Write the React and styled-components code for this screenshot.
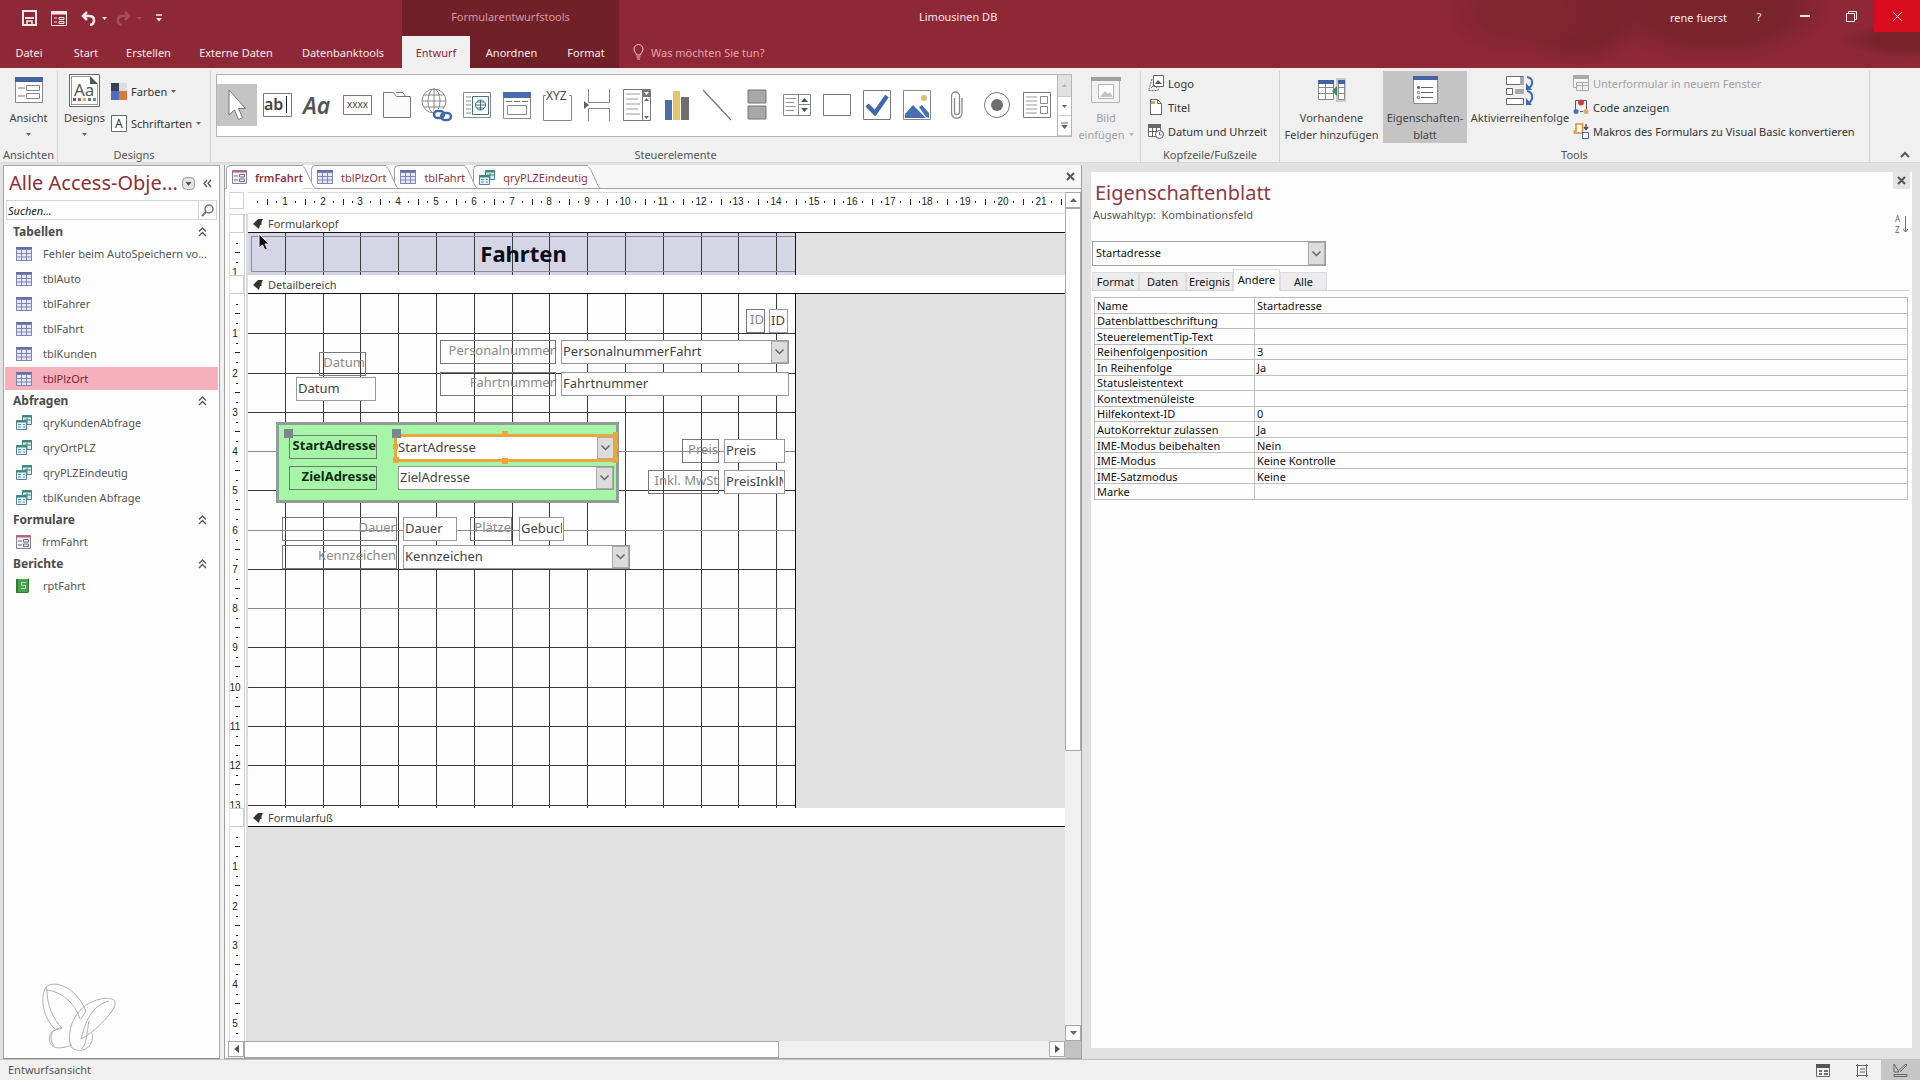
import React from "react";
import styled, { createGlobalStyle, css } from "styled-components";

const CM_X = 37.8;
const CM_Y = 39.27;
const FORM_WIDTH = 548;

const Global = createGlobalStyle`
  * { box-sizing: border-box; }
  body { margin: 0; background: #e1e1e1; font-family: "Noto Sans", "Open Sans", sans-serif; font-size: 11px; color: #3c3c3c; }
  button, input, select { font: inherit; color: inherit; border: 0; padding: 0; margin: 0; background: none; border-radius: 0; outline: 0; }
  svg { display: block; flex: none; }
`;

const Window = styled.div`
  display: flex;
  flex-direction: column;
  height: 100vh;
  overflow: hidden;
`;

/* ---------- title bar ---------- */
const Header = styled.header`
  height: 68px;
  flex: none;
  display: grid;
  grid-template-columns: 402px 217px 1fr;
  background:
    radial-gradient(ellipse 80px 44px at calc(100% - 400px) 14px, #82252f 50%, transparent),
    radial-gradient(ellipse 70px 56px at calc(100% - 340px) 12px, #7a242c 60%, transparent),
    radial-gradient(ellipse 120px 56px at calc(100% - 205px) 8px, #7a242c 60%, transparent),
    radial-gradient(ellipse 70px 18px at calc(100% - 10px) 40px, #78232a 50%, transparent),
    #8f2836;
  color: #f6e9ea;
`;
const HeaderPart = styled.div`
  display: grid;
  grid-template-rows: 36px 32px;
  min-width: 0;
  background: ${(p) => (p.$dark ? "#6f2029" : "transparent")};
`;
const QuickBar = styled.div`
  display: flex;
  align-items: center;
  padding: 0 0 0 22px;
`;
const QuickButton = styled.button`
  display: flex;
  align-items: center;
  gap: 6px;
  margin-right: ${(p) => p.$gap}px;
  opacity: ${(p) => (p.$off ? 0.2 : 1)};
`;
const ContextTitle = styled.div`
  text-align: center;
  line-height: 34px;
  color: #d99aa2;
`;
const TabRow = styled.nav`
  display: flex;
`;
const RibbonTab = styled.button`
  width: ${(p) => p.$w}px;
  white-space: nowrap;
  text-align: center;
  ${(p) => p.$active && css`background: #f0f0f0; color: #8f2836;`}
`;
const TitleLine = styled.div`
  display: flex;
  align-items: flex-start;
  justify-content: space-between;
`;
const AppTitle = styled.div`
  padding-left: 300px;
  line-height: 34px;
`;
const WindowButtons = styled.div`
  display: flex;
`;
const WindowButton = styled.button`
  width: 46px;
  height: 32px;
  display: flex;
  align-items: center;
  justify-content: center;
  ${(p) => p.$close && css`background: #d80c1c;`}
`;
const UserName = styled.button`
  width: 66px;
  height: 34px;
  text-align: left;
`;
const TellMe = styled.label`
  display: flex;
  align-items: center;
  gap: 7px;
  padding-left: 14px;
  input { width: 160px; color: #e3a6ad; }
  input::placeholder { color: #e3a6ad; opacity: 1; }
`;

/* ---------- ribbon ---------- */
const Ribbon = styled.section`
  flex: none;
  height: 95px;
  display: flex;
  background: #f0f0f0;
  border-bottom: 1px solid #d8d8d8;
  padding-top: 3px;
`;
const Group = styled.div`
  width: ${(p) => p.$w}px;
  flex: ${(p) => (p.$grow ? `1 1 ${p.$w}px` : "none")};
  display: grid;
  grid-template-rows: 75px 16px;
  border-right: 1px solid #d2d2d2;
`;
const GroupBody = styled.div`
  display: flex;
  min-width: 0;
  padding-left: ${(p) => p.$pad || 0}px;
`;
const GroupLabel = styled.div`
  text-align: center;
  line-height: 18px;
  color: #555;
  white-space: nowrap;
`;
const BigButton = styled.button`
  width: ${(p) => p.$w}px;
  height: 72px;
  flex: none;
  display: grid;
  grid-template-rows: 38px auto;
  justify-items: center;
  align-items: center;
  align-content: start;
  line-height: 17px;
  white-space: nowrap;
  color: ${(p) => (p.$off ? "#a0a0a0" : "#444")};
  background: ${(p) => (p.$active ? "#c4c4c4" : "transparent")};
`;
const BigText = styled.span`
  display: flex;
  flex-direction: column;
  align-items: center;
`;
const ArrowLine = styled.span`
  display: flex;
  align-items: center;
  gap: 4px;
  min-height: 17px;
`;
const SmallStack = styled.div`
  display: flex;
  flex-direction: column;
  padding-top: ${(p) => p.$top || 0}px;
`;
const SmallButton = styled.button`
  height: ${(p) => p.$h || 24}px;
  display: flex;
  align-items: center;
  gap: 4px;
  white-space: nowrap;
  color: ${(p) => (p.$off ? "#a0a0a0" : "#333")};
`;
const Gallery = styled.div`
  flex: 1;
  height: 63px;
  margin-top: 3px;
  display: flex;
  background: #fff;
  border: 1px solid #b4b4b4;
`;
const GalleryItems = styled.div`
  flex: 1;
  display: grid;
  grid-template-columns: repeat(21, 1fr);
  padding: 9px 0 10px;
`;
const GalleryItem = styled.button`
  display: flex;
  align-items: center;
  justify-content: center;
  background: ${(p) => (p.$active ? "#c4c4c4" : "transparent")};
`;
const GalleryScroll = styled.div`
  width: 14px;
  display: grid;
  grid-template-rows: 22px 19px 20px;
  border-left: 1px solid #b4b4b4;
`;
const GalleryArrow = styled.button`
  display: flex;
  align-items: center;
  justify-content: center;
  border-bottom: 1px solid #ccc;
  background: ${(p) => (p.$off ? "#e1e1e1" : "#fff")};
`;
const CollapseSlot = styled.div`
  width: 50px;
  display: flex;
  align-items: flex-end;
  justify-content: flex-end;
  padding: 0 10px 4px 0;
`;

/* ---------- main ---------- */
const Main = styled.main`
  flex: 1;
  min-height: 0;
  display: flex;
  padding-top: 2px;
  background: #e1e1e1;
`;
const NavPane = styled.aside`
  width: 217px;
  flex: none;
  margin-left: 3px;
  background: #fdfdfd;
  border: 1px solid #a8a8a8;
  border-bottom-color: #8a8a8a;
  display: flex;
  flex-direction: column;
  padding: 0 1px;
`;
const Splitter = styled.div`
  width: 4px;
  flex: none;
  background: #f0f0f0;
`;
const NavHead = styled.div`
  height: 34px;
  display: flex;
  align-items: center;
  justify-content: space-between;
  padding: 0 6px 0 4px;
  color: #8c3039;
`;
const NavTitle = styled.h1`
  margin: 0;
  font-size: 20px;
  line-height: 34px;
  font-weight: 400;
  white-space: nowrap;
`;
const NavIcons = styled.div`
  display: flex;
  align-items: center;
  gap: 8px;
`;
const Search = styled.label`
  height: 20px;
  flex: none;
  margin: 0 1px 2px;
  display: flex;
  border: 1px solid #d0d4dc;
  input { flex: 1; min-width: 0; font-style: italic; padding-left: 1px; }
  input::placeholder { color: #222; opacity: 1; }
`;
const SearchIcon = styled.span`
  width: 18px;
  display: flex;
  align-items: center;
  justify-content: center;
  border-left: 1px solid #d0d4dc;
`;
const NavGroup = styled.button`
  height: 19px;
  flex: none;
  display: flex;
  align-items: center;
  justify-content: space-between;
  padding: 0 11px 0 8px;
  font-weight: 700;
  font-size: 12px;
  color: #4c4c4c;
`;
const NavItem = styled.button`
  height: ${(p) => (p.$active ? 23 : 25)}px;
  margin: ${(p) => (p.$active ? "1px 0" : 0)};
  flex: none;
  display: flex;
  align-items: center;
  gap: 11px;
  padding-left: 11px;
  white-space: nowrap;
  color: ${(p) => (p.$active ? "#7a2532" : "#555")};
  background: ${(p) => (p.$active ? "#f4b0bc" : "transparent")};
`;
const Watermark = styled.div`
  margin: auto 0 5px 36px;
`;

/* ---------- document ---------- */
const Doc = styled.section`
  flex: 856 1 0;
  min-width: 0;
  display: flex;
  flex-direction: column;
  border: 1px solid #a0a0a0;
  border-top: 0;
  background: #fff;
`;
const DocTabs = styled.div`
  height: 24px;
  flex: none;
  display: flex;
  align-items: stretch;
  padding-left: 1px;
  background: #f7f7f7;
  border-bottom: 1px solid #a0a0a0;
`;
const DocTab = styled.button`
  position: relative;
  z-index: ${(p) => p.$z};
  height: 24px;
  display: flex;
  align-items: stretch;
  margin-right: -6px;
  font-weight: ${(p) => (p.$active ? 600 : 400)};
  color: #8c3342;
  svg:last-child { margin-left: -4px; }
`;
const DocTabFace = styled.span`
  position: relative;
  z-index: 1;
  display: flex;
  align-items: center;
  gap: 8px;
  padding-left: 5px;
  border: 1px solid #a0a0a0;
  border-width: 1px 0 0 1px;
  border-bottom: 1px solid ${(p) => (p.$active ? "#fff" : "#a0a0a0")};
  border-top-left-radius: 5px;
  background: #fff;
`;
const DocClose = styled.button`
  margin-left: auto;
  width: 22px;
  display: flex;
  align-items: center;
  justify-content: center;
`;
const Work = styled.div`
  flex: 1;
  min-height: 0;
  display: grid;
  grid-template-columns: 1fr 16px;
  grid-template-rows: 1fr 17px;
  padding-top: 3px;
  background: #fbfbfb;
`;
const Surface = styled.div`
  display: flex;
  flex-direction: column;
  min-width: 0;
  min-height: 0;
  overflow: hidden;
  padding-left: 4px;
`;
const Row = styled.div`
  display: grid;
  grid-template-columns: 15px 4px 1fr;
  flex: ${(p) => (p.$grow ? "1 1 0" : "none")};
  min-height: 0;
  height: ${(p) => (p.$h ? `${p.$h}px` : "auto")};
`;
const RulerCorner = styled.div`
  border: 1px solid #d0d0d0;
  border-left-color: #e8e8e8;
  background: #fff;
  margin-bottom: ${(p) => p.$gap || 0}px;
`;
const Gutter = styled.div`
  background: linear-gradient(90deg, #d0d0d0 1px, #fafafa 1px 2px, #dcdcdc 2px);
`;
const RulerTrack = styled.div`
  overflow: hidden;
  background: #fff;
  border: 1px solid #d8d8d8;
  border-width: ${(p) => (p.$across ? "1px 0" : "0 0 0 1px")};
  text { font-size: 10px; fill: #222; font-family: "Liberation Sans", Arial, sans-serif; }
`;
const SectionBar = styled.div`
  display: flex;
  align-items: center;
  gap: 4px;
  padding-left: 5px;
  color: #444;
  background: #fff;
  border-bottom: 1px solid #111;
`;
const Canvas = styled.div`
  position: relative;
  overflow: hidden;
  background: #e1e1e1;
`;
const Paper = styled.div`
  position: absolute;
  inset: 0 auto 0 0;
  width: ${FORM_WIDTH}px;
  background: ${(p) => p.$fill};
  border-right: 1px solid #111;
`;
const placed = css`
  position: absolute;
  left: ${(p) => p.$x}px;
  top: ${(p) => p.$y}px;
  width: ${(p) => p.$w}px;
  height: ${(p) => p.$h || 24}px;
`;
const FieldLabel = styled.label`
  ${placed}
  border: 1px solid #777;
  font-size: 13px;
  line-height: 19px;
  text-align: right;
  white-space: nowrap;
  color: ${(p) => (p.$bold ? "#0c2a10" : "#8a8a8a")};
  font-weight: ${(p) => (p.$bold ? 700 : 400)};
`;
const FieldInput = styled.input`
  ${placed}
  border: 1px solid #999;
  background: #fff;
  font-size: 13px;
  padding: 0 1px 3px;
  color: #444;
`;
const ComboFrame = styled.div`
  ${placed}
  display: grid;
  border: ${(p) => (p.$selected ? "3px solid #eca63c" : "1px solid #999")};
  background: #fff;
  select { grid-area: 1 / 1; appearance: none; font-size: 13px; padding: 0 20px 3px 1px; color: #444; min-width: 0; }
`;
const ComboArrow = styled.span`
  grid-area: 1 / 1;
  justify-self: end;
  width: 17px;
  display: flex;
  align-items: center;
  justify-content: center;
  background: #dcdcdc;
  border: 1px solid #aaa;
  pointer-events: none;
`;
const Highlight = styled.div`
  ${placed}
  background: #a5f6a7;
  border: 3px solid #8f9e96;
`;
const Handle = styled.span`
  ${placed}
  background: ${(p) => p.$c};
`;
const FormTitle = styled.h2`
  position: absolute;
  left: 3px;
  right: 0;
  top: 3px;
  height: 36px;
  margin: 0;
  border: 1px solid #8c8c94;
  border-right: 0;
  text-align: center;
  font-size: 22px;
  line-height: 33px;
  color: #0b0b12;
`;
const Pointer = styled.div`
  position: absolute;
  left: 10px;
  top: 0;
  z-index: 3;
`;
const VScroll = styled.div`
  display: flex;
  flex-direction: column;
  background: #f0f0f0;
`;
const HScroll = styled.div`
  display: flex;
  margin-left: 3px;
  background: #f0f0f0;
`;
const ScrollButton = styled.button`
  width: 16px;
  height: 16px;
  flex: none;
  display: flex;
  align-items: center;
  justify-content: center;
  background: #fff;
  border: 1px solid #a8a8a8;
`;
const Thumb = styled.div`
  flex: ${(p) => p.$size} 1 0;
  background: #fff;
  border: 1px solid #a8a8a8;
`;
const Track = styled.div`
  flex: ${(p) => p.$size} 1 0;
`;
const Corner = styled.div`
  background: #c2c2c2;
`;

/* ---------- property sheet ---------- */
const Side = styled.aside`
  flex: 821 1 0;
  min-width: 0;
  padding: 7px 8px 11px 9px;
  display: flex;
`;
const Sheet = styled.div`
  flex: 1;
  min-width: 0;
  background: #fefefe;
  padding: 5px 2px 0 1px;
  display: flex;
  flex-direction: column;
`;
const SheetHead = styled.div`
  display: flex;
  justify-content: space-between;
  height: 64px;
`;
const SheetTitle = styled.h2`
  margin: 0;
  padding-left: 3px;
  font-size: 20px;
  line-height: 31px;
  font-weight: 400;
  color: #8c3a48;
`;
const SheetKind = styled.div`
  padding-left: 1px;
  line-height: 14px;
  color: #555;
  white-space: pre;
`;
const SheetTools = styled.div`
  display: flex;
  flex-direction: column;
  align-items: center;
  gap: 24px;
`;
const SheetClose = styled.button`
  width: 17px;
  height: 17px;
  margin-top: -5px;
  display: flex;
  align-items: center;
  justify-content: center;
  background: #e4e4e4;
`;
const ObjectSelect = styled.div`
  width: 234px;
  height: 25px;
  display: grid;
  border: 1px solid #a0a0a0;
  select { grid-area: 1 / 1; appearance: none; padding: 0 20px 3px 3px; color: #111; }
`;
const SheetTabs = styled.div`
  display: flex;
  align-items: flex-end;
  height: 25px;
  border-bottom: 1px solid #d0d0d0;
`;
const SheetTab = styled.button`
  width: 47px;
  height: ${(p) => (p.$active ? 22 : 18)}px;
  margin-bottom: ${(p) => (p.$active ? -1 : 0)}px;
  padding-bottom: ${(p) => (p.$active ? 3 : 0)}px;
  color: #111;
  background: ${(p) => (p.$active ? "#fefefe" : "#ececec")};
  border: 1px solid #dcdcdc;
  border-bottom: 0;
`;
const PropTable = styled.table`
  height: 203px;
  margin: 6px 2px 0;
  border-collapse: collapse;
  table-layout: fixed;
  line-height: 13px;
  color: #111;
  th, td { padding: 0 2px; border: 1px solid #bdbdbd; text-align: left; font-weight: 400; white-space: nowrap; }
  th { width: 160px; }
`;

const StatusBar = styled.footer`
  height: 21px;
  flex: none;
  display: flex;
  justify-content: space-between;
  padding-left: 8px;
  background: #f0f0f0;
  border-top: 1px solid #c0c0c0;
  line-height: 19px;
  color: #555;
`;
const ViewButtons = styled.div`
  display: flex;
`;
const ViewButton = styled.button`
  width: 39px;
  display: flex;
  align-items: center;
  justify-content: center;
  background: ${(p) => (p.$active ? "#c6c6c6" : "transparent")};
`;

/* ---------- icons ---------- */
const S = ({ w = 28, h = 28, children, ...r }) => (
  <svg width={w} height={h} viewBox={`0 0 ${w} ${h}`} fill="none" stroke="#666" {...r}>{children}</svg>
);
const Down = ({ c = "#666" }) => (
  <S w={7} h={4} stroke="none"><path d="M0 0h7L3.5 4z" fill={c} /></S>
);
const SmallDown = ({ c = "#666" }) => (
  <S w={5} h={3} stroke="none"><path d="M0 0h5L2.5 3z" fill={c} /></S>
);
const Chevron = () => <S w={11} h={8}><path d="M1.5 1.5l4 4 4-4" strokeWidth="1.5" /></S>;
const Cross = ({ size = 10, c = "#555", sw = 2 }) => (
  <S w={size} h={size} stroke={c} strokeWidth={sw}><path d={`M1 1L${size - 1} ${size - 1}M${size - 1} 1L1 ${size - 1}`} /></S>
);
const DoubleUp = () => <S w={9} h={10} stroke="#555" strokeWidth="1.3"><path d="M1 4.5l3.5-3.5 3.5 3.5M1 9l3.5-3.5 3.5 3.5" /></S>;

const TableIcon = () => (
  <S w={16} h={14} stroke="none">
    <path d="M0 0h16v14H0z" fill="#7f86b4" />
    <path d="M1 3h4v3H1zM6 3h4v3H6zM11 3h4v3h-4zM1 7h4v2.500H1zM6 7h4v2.500H6zM11 7h4v2.500h-4zM1 10.500h4v2.500H1zM6 10.500h4v2.500H6zM11 10.500h4v2.500h-4z" fill="#e4e8f6" />
    <path d="M0 0h16v2H0z" fill="#686fa0" />
  </S>
);
const QueryIcon = () => (
  <S w={16} h={15} stroke="#4f7f8a">
    <path d="M6.500.5h9v9h-9z" fill="#d8f0ee" /><path d="M6 1.500h10" stroke="#3a8a7a" strokeWidth="2" /><path d="M11 3v6M8 5h7" />
    <path d="M.5 5.500h10v9H.5z" fill="#e6f2fa" stroke="#5a7f9a" /><path d="M0 6.500h11" stroke="#3a8a7a" strokeWidth="2" />
    <path d="M2 9.500h3M7 9.500h2M2 12h3M7 12h2" stroke="#4e94b4" />
  </S>
);
const FormIcon = () => (
  <S w={15} h={14} stroke="#8a7f98">
    <path d="M.5.5h14v13H.5z" fill="#f3eef4" /><path d="M0 1.500h15" stroke="#b8607a" strokeWidth="2" />
    <path d="M2 6h4M2 10h4" stroke="#6a6a80" /><path d="M7.500 4.500h5v2.500h-5zM7.500 9h5v2.500h-5z" stroke="#6a6a80" />
  </S>
);
const ReportIcon = () => (
  <S w={16} h={15} stroke="none">
    <path d="M0 1h12l1-1v14l-1 1H0z" fill="#2f7a34" /><path d="M2 1h10v13H2z" fill="#4da04e" />
    <path d="M5 4h5v1H6v2h4v4H5v-1h4V8H5z" fill="#b4e2ac" />
  </S>
);
const navIcons = { table: TableIcon, query: QueryIcon, form: FormIcon, report: ReportIcon };

const galleryIcons = [
  ["Auswählen", <S key="0" w={20} h={32}><path d="M2 1v25l5.500-5 4 9.500 4-2-4-9h7z" fill="#fff" stroke="#777" /></S>],
  ["Textfeld", <S key="1" w={29} h={24}><path d="M.5.5h28v23H.5z" stroke="#777" /><text x="1" y="17" fontSize="16" fontWeight="600" fill="#444" stroke="none">ab</text><path d="M23.500 3v17" stroke="#222" /></S>],
  ["Bezeichnung", <S key="2" w={30} h={26}><text x="1" y="22" fontSize="23" fontWeight="600" fontStyle="italic" fill="#555" stroke="none">Aa</text></S>],
  ["Schaltfläche", <S key="3" w={29} h={20}><path d="M.5.5h28v19H.5z" stroke="#777" /><text x="4" y="13" fontSize="10" fill="#444" stroke="none">xxxx</text></S>],
  ["Registersteuerelement", <S key="4" w={28} h={28}><path d="M.5 26.500V1.500h10l3 4h14v21z" fill="#fafafa" stroke="#777" /><path d="M13 1.500h7l2.500 4" stroke="#777" /></S>],
  ["Link", <S key="5" w={32} h={34}><circle cx="13" cy="13" r="12" stroke="#888" /><path d="M13 1v24M1 13h24M3 7h20M3 19h20" stroke="#888" /><ellipse cx="13" cy="13" rx="6" ry="12" stroke="#888" /><path d="M13 21h18v12H13z" fill="#fff" stroke="none" /><rect x="13" y="23" width="10" height="7" rx="3.500" stroke="#3f68ab" strokeWidth="2.500" /><rect x="20" y="25" width="10" height="7" rx="3.500" stroke="#3f68ab" strokeWidth="2.500" /></S>],
  ["Webbrowser", <S key="6" w={28} h={26}><path d="M.5.5h27v25H.5z" stroke="#888" /><path d="M3 5h5M3 9h5M3 13h5M3 17h5M3 21h5" stroke="#888" /><path d="M9.500 4.500h16v18h-16z" stroke="#4a7186" /><circle cx="17.500" cy="13" r="5" stroke="#3f7089" /><path d="M12 13h11M17.500 8v10M14 10h7M14 16h7" stroke="#3f7089" /></S>],
  ["Navigation", <S key="7" w={28} h={27}><path d="M.5.5h27v26H.5z" stroke="#888" /><path d="M0 0h28v6H0z" fill="#4b6cac" stroke="none" /><path d="M3 9.500h22" strokeDasharray="6 2" stroke="#777" /><path d="M4.500 13.500h19v9h-19z" stroke="#888" /></S>],
  ["Optionsgruppe", <S key="8" w={29} h={32}><path d="M3 6.500H.5v25h28v-25H26" stroke="#888" /><text x="3" y="11" fontSize="12" fill="#444" stroke="none">XYZ</text></S>],
  ["Seitenumbruch", <S key="9" w={26} h={32}><path d="M4.500 0v13.500h21V0M4.500 32V19.500h21V32" stroke="#888" /><path d="M0 12l5 4-5 4z" fill="#555f78" stroke="none" /></S>],
  ["Kombinationsfeld", <S key="10" w={28} h={32}><path d="M.5.5h27v31H.5zM19.500 0v32M19 7.500h9" stroke="#777" /><path d="M20 1h7v6h-7z" fill="#777" stroke="none" /><path d="M21 3h5l-2.500 3z" fill="#fff" stroke="none" /><path d="M3 5h14M3 10h12M3 15h14M3 20h12M3 25h14" stroke="#999" /><path d="M21 12h5l-2.500-3zM21 27h5l-2.500 3z" fill="#666" stroke="none" /></S>],
  ["Diagramm", <S key="11" w={24} h={30} stroke="none"><path d="M0 10h7v20H0z" fill="#4a6fa8" /><path d="M8 1h7v29H8z" fill="#e4c46c" /><path d="M16 7h8v23h-8z" fill="#6e6e6e" /></S>],
  ["Linie", <S key="12" w={28} h={32}><path d="M0 1l28 30" stroke="#777" strokeWidth="1.300" /></S>],
  ["Umschaltfläche", <S key="13" w={20} h={32}><path d="M1 1h18v13H1zM1 17h18v13H1z" fill="#a8a8a8" stroke="#777" /></S>],
  ["Listenfeld", <S key="14" w={28} h={22}><path d="M.5.5h27v21H.5zM15.500 0v22M15 10.500h13" stroke="#888" /><path d="M3 4.500h10M3 8.500h8M3 12.500h10M3 16.500h8" stroke="#999" /><path d="M18 8h7l-3.500-4zM18 14h7l-3.500 4z" fill="#4a5560" stroke="none" /></S>],
  ["Rechteck", <S key="15" w={28} h={22}><path d="M.5.5h27v21H.5z" stroke="#777" /></S>],
  ["Kontrollkästchen", <S key="16" w={28} h={30}><path d="M.5.5h27v29H.5z" stroke="#777" /><path d="M4 15l8 8L24 6" stroke="#3f68ab" strokeWidth="4.500" /></S>],
  ["Bild", <S key="17" w={28} h={30}><path d="M.5.5h27v29H.5z" stroke="#888" /><path d="M2 28v-4l8-9 13 13zM16 17l3-2 7 8v5l-3-1z" fill="#4a6fb0" stroke="none" /><circle cx="21" cy="8" r="3" fill="#e0bd6a" stroke="none" /></S>],
  ["Anlage", <S key="18" w={12} h={30}><path d="M3.500 8v14a2.500 2.500 0 005 0V6a4 4 0 00-8 0v17a5 5 0 0010.500 0V8" stroke="#888" strokeWidth="1.300" /></S>],
  ["Optionsfeld", <S key="19" w={28} h={28}><circle cx="14" cy="14" r="12.500" stroke="#777" /><circle cx="14" cy="14" r="6" fill="#6e6e6e" stroke="none" /></S>],
  ["Unterformular", <S key="20" w={28} h={26}><path d="M.5.5h27v25H.5z" stroke="#777" /><path d="M3 5h11M3 9h11M3 13h11M3 17h11M3 21h11" stroke="#999" /><path d="M17.500 4.500h7v7h-7zM17.500 14.500h7v7h-7z" stroke="#888" /></S>],
];

const AnsichtIcon = () => <S w={28} h={26}><path d="M.5.5h27v25H.5z" fill="#fff" stroke="#888" /><path d="M0 0h28v5H0z" fill="#4463a0" stroke="none" /><path d="M3 11h7M3 19h7" stroke="#777" /><path d="M11.500 8.500h13v5h-13zM11.500 16.500h13v5h-13z" stroke="#888" /></S>;
const DesignsIcon = () => <S w={31} h={33}><path d="M.5.5h30v32H.5z" fill="#fff" stroke="#666" /><path d="M2.500 2.500h18l8 8v20h-26z" stroke="#999" /><path d="M21 2v8h8z" fill="#555" stroke="none" /><text x="5" y="22" fontSize="17" fill="#555" stroke="none">Aa</text><path d="M4 24h3v3H4z" fill="#4463a0" stroke="none" /><path d="M9 24h3v3H9z" fill="#c8553d" stroke="none" /><path d="M14 24h3v3h-3z" fill="#e0b04c" stroke="none" /><path d="M19 24h3v3h-3z" fill="#4a7fb0" stroke="none" /><path d="M24 24h3v3h-3z" fill="#6a9a4a" stroke="none" /></S>;
const ColorsIcon = () => <S w={16} h={17} stroke="none"><path d="M0 0h8v8H0z" fill="#3a4250" /><path d="M8 0h8v8H8z" fill="#d8dce4" /><path d="M0 8h8v9H0z" fill="#4b6cc0" /><path d="M8 8h8v9H8z" fill="#d87a3c" /></S>;
const FontsIcon = () => <S w={16} h={17}><path d="M.5.5h15v16H.5z" fill="#fff" /><text x="4" y="13" fontSize="12" fill="#333" stroke="none">A</text></S>;
const PictureIcon = () => <S w={30} h={26} stroke="#b4b4b4"><path d="M.5.5h28v25H.5z" fill="#f2f2f2" /><path d="M0 0h30v4H0z" fill="#a0a0a0" stroke="none" /><path d="M7.500 7.500h15v14h-15z" fill="#fff" /><path d="M9 20l5-6 3 3 2-2 3 5z" fill="#c4c4c4" stroke="none" /></S>;
const LogoIcon = () => <S w={16} h={16}><path d="M5.500.5h10v11h-10z" fill="#fff" /><path d="M7 9l3-4 4 4z" fill="#4a5a78" stroke="none" /><path d="M4 4L.5 15.500H10l1-3" strokeDasharray="2 1" /><path d="M3 13l3-3 3 3" /></S>;
const TitelIcon = () => <S w={16} h={16}><path d="M2.500.5h7l4 4v11h-11z" fill="#fff" /><path d="M9.500.5v4h4" /><path d="M3 2h4v3H3z" fill="#c8a860" stroke="none" /></S>;
const DateIcon = () => <S w={16} h={16}><path d="M.5 1.500h12v12H.5zM0 4.500h13M4.500 4v9M8.500 4v9M0 8.500h12" fill="#fff" /><path d="M0 1h13v3H0z" fill="#666" stroke="none" /><circle cx="11.500" cy="11.500" r="4" fill="#fff" stroke="#557" /><path d="M11.500 9v3h2" /></S>;
const FieldsIcon = () => <S w={28} h={24}><path d="M.5 2.500h15v19H.5zM0 9.500h15M0 15.500h15M7.500 5v16" fill="#fff" stroke="#888" /><path d="M0 2h16v4H0z" fill="#4463a0" stroke="none" /><path d="M18 0h10v24H18z" fill="#c6cbd0" stroke="none" /><path d="M20.500 2.500h6v19h-6zM20 9.500h6M20 15.500h6" fill="#fff" stroke="#888" /><path d="M20 2h7v4h-7z" fill="#4463a0" stroke="none" /><path d="M19 8v10l-5-5z" fill="#4a8068" stroke="none" /></S>;
const SheetIcon = () => <S w={25} h={28}><path d="M.5.5h24v27H.5z" fill="#fff" stroke="#888" /><path d="M0 0h25v4H0z" fill="#4463a0" stroke="none" /><path d="M8 11.500h12M8 16.500h12M8 21.500h12" stroke="#666" /><circle cx="5.500" cy="11.500" r="1.500" fill="#556" stroke="none" /><circle cx="5.500" cy="16.500" r="1.200" /><circle cx="5.500" cy="21.500" r="1.200" /></S>;
const OrderIcon = () => <S w={28} h={29}><path d="M.5.5h17v8H.5zM.5 12.500h6v6h-6zM.5 22.500h17v6H.5z" fill="#fff" /><path d="M14 1h4v8h-4zM9 13h9v5H9z" fill="#a8a8a8" stroke="none" /><path d="M21 1c6 1 7 7 2 11M21 15c6 1 7 8 2 12" stroke="#3f68ab" strokeWidth="2" /><path d="M20 7v7h6zM20 22v7h6z" fill="#3f68ab" stroke="none" /></S>;
const SubformIcon = () => <S w={16} h={16} stroke="#aaa"><path d="M.5.5h15v12H.5z" fill="#f6f6f6" /><path d="M0 0h16v4H0z" fill="#aaa" stroke="none" /><path d="M3.500 7.500h12v8h-12zM3 10.500h12M9.500 8v7" fill="#eee" /></S>;
const CodeIcon = () => <S w={16} h={16}><path d="M2.500 10V1.500H6M13.500 10V1.500H10" stroke="#555" /><circle cx="8" cy="3.500" r="3" fill="#c8403c" stroke="none" /><circle cx="3" cy="12.500" r="2.500" fill="#4a6fb0" stroke="none" /><circle cx="13" cy="12.500" r="2.500" fill="#e4a86c" stroke="none" /><path d="M7 12.500h3" /></S>;
const MacroIcon = () => <S w={16} h={16}><path d="M3 1h6.500v9H1.500V8H3z" stroke="#dd8c34" strokeWidth="1.600" fill="#fff" /><path d="M9.500 9.500h6v6h-6z" fill="#fff" stroke="#4463a0" /><path d="M13 1v5M11 4l2 2.500 2-2.500" stroke="#444" strokeWidth="1.300" /></S>;

/* ---------- rulers and grid ---------- */
const range = (n) => Array.from({ length: n }, (_, i) => i);

const HorizontalRuler = () => (
  <svg width="100%" height="18">
    {range(22).map((i) => {
      const x = Math.round(i * CM_X) - 1;
      return (
        <g key={i} shapeRendering="crispEdges">
          {i > 0 && <text x={x} y="12" textAnchor="middle">{i}</text>}
          <path d={`M${x + 10.5} 8v2M${x + 20.5} 6v6M${x + 29.5} 8v2`} stroke="#222" />
        </g>
      );
    })}
  </svg>
);

const VerticalRuler = ({ count, height = "100%" }) => (
  <svg width="14" height={height}>
    {range(count).map((i) => {
      const y = Math.round(i * CM_Y);
      return (
        <g key={i} shapeRendering="crispEdges">
          {i > 0 && <text x="5" y={y + 4} textAnchor="middle">{i}</text>}
          <path d={`M6 ${y + 10.5}h2M5 ${y + 19.5}h5M6 ${y + 29.5}h2`} stroke="#222" />
        </g>
      );
    })}
  </svg>
);

const GridLines = ({ rows }) => (
  <svg width="100%" height="100%" shapeRendering="crispEdges" stroke="#3a3a3a">
    {range(14).map((i) => {
      const x = Math.round((i + 1) * CM_X) - 0.5;
      return <path key={i} d={`M${x} 0v900`} />;
    })}
    {range(rows).map((i) => (
      <path key={i} d={`M0 ${Math.round((i + 1) * CM_Y) + 0.5}h${FORM_WIDTH}`} stroke={[3, 5, 7].includes(i) ? "#8a8a8a" : "#3a3a3a"} />
    ))}
  </svg>
);

const Section = ({ title, height, children, rulerCount }) => (
  <>
    <Row $h={19}>
      <RulerCorner />
      <Gutter />
      <SectionBar>
        <S w={11} h={11} stroke="none"><path d="M0 6l5-5h5L8.500 4v3H7l-1 4z" fill="#333" /></S>
        {title}
      </SectionBar>
    </Row>
    <Row $h={height} $grow={!height}>
      <RulerTrack><VerticalRuler count={rulerCount} height={height || 210} /></RulerTrack>
      <Gutter />
      <Canvas>{children}</Canvas>
    </Row>
  </>
);

const Combo = ({ id, value, ...place }) => (
  <ComboFrame {...place}>
    <select id={id} defaultValue={value}><option>{value}</option></select>
    <ComboArrow><Chevron /></ComboArrow>
  </ComboFrame>
);

const gallerySelected = 0;
const tables = ["Fehler beim AutoSpeichern vo...", "tblAuto", "tblFahrer", "tblFahrt", "tblKunden", "tblPlzOrt"];
const navGroups = [
  ["Tabellen", "table", tables],
  ["Abfragen", "query", ["qryKundenAbfrage", "qryOrtPLZ", "qryPLZEindeutig", "tblKunden Abfrage"]],
  ["Formulare", "form", ["frmFahrt"]],
  ["Berichte", "report", ["rptFahrt"]],
];
const docTabs = [["frmFahrt", "form"], ["tblPlzOrt", "table"], ["tblFahrt", "table"], ["qryPLZEindeutig", "query"]];
const properties = [
  ["Name", "Startadresse"], ["Datenblattbeschriftung", ""], ["SteuerelementTip-Text", ""],
  ["Reihenfolgenposition", "3"], ["In Reihenfolge", "Ja"], ["Statusleistentext", ""],
  ["Kontextmenüleiste", ""], ["Hilfekontext-ID", "0"], ["AutoKorrektur zulassen", "Ja"],
  ["IME-Modus beibehalten", "Nein"], ["IME-Modus", "Keine Kontrolle"], ["IME-Satzmodus", "Keine"], ["Marke", ""],
];
const mainTabs = [["Datei", 58], ["Start", 56], ["Erstellen", 69], ["Externe Daten", 106], ["Datenbanktools", 108]];

const TitleBar = () => (
  <Header>
    <HeaderPart>
      <QuickBar>
        <QuickButton $gap={14} aria-label="Speichern"><S w={15} h={16} stroke="#f6e9ea" strokeWidth="2"><path d="M1 1h13v14H1zM3 8h9" /><path d="M5 15v-4h5v4" strokeWidth="1.500" /></S></QuickButton>
        <QuickButton $gap={14} aria-label="Formular"><S w={16} h={15} stroke="#f6e9ea"><path d="M.5.5h15v14H.5z" /><path d="M0 2h16" strokeWidth="3" /><path d="M3 7h3M3 11h3M8 6.500h5v2H8zM8 10.500h5v2H8z" /></S></QuickButton>
        <QuickButton $gap={9} aria-label="Rückgängig"><S w={15} h={15} stroke="#f6e9ea" strokeWidth="2.500"><path d="M6 1L2 5l4 4M2 5h6c7 0 6 8 1 9" /></S><SmallDown c="#f6e9ea" /></QuickButton>
        <QuickButton $gap={14} $off aria-label="Wiederholen"><S w={15} h={15} stroke="#f6e9ea" strokeWidth="2.500"><path d="M9 1l4 4-4 4M13 5H7c-7 0-6 8-1 9" /></S><SmallDown c="#f6e9ea" /></QuickButton>
        <QuickButton $gap={0} aria-label="Anpassen"><S w={6} h={8} stroke="#f6e9ea"><path d="M0 1h6" strokeWidth="1.500" /><path d="M0 4h6L3 7.500z" fill="#f6e9ea" stroke="none" /></S></QuickButton>
      </QuickBar>
      <TabRow>{mainTabs.map(([t, w]) => <RibbonTab key={t} $w={w}>{t}</RibbonTab>)}</TabRow>
    </HeaderPart>
    <HeaderPart $dark>
      <ContextTitle>Formularentwurfstools</ContextTitle>
      <TabRow>
        <RibbonTab $w={68} $active>Entwurf</RibbonTab>
        <RibbonTab $w={83}>Anordnen</RibbonTab>
        <RibbonTab $w={66}>Format</RibbonTab>
      </TabRow>
    </HeaderPart>
    <HeaderPart>
      <TitleLine>
        <AppTitle>Limousinen DB</AppTitle>
        <WindowButtons>
          <UserName>rene fuerst</UserName>
          <WindowButton aria-label="Hilfe">?</WindowButton>
          <WindowButton aria-label="Minimieren"><S w={10} h={2} stroke="#f6e9ea" strokeWidth="2"><path d="M0 1h10" /></S></WindowButton>
          <WindowButton aria-label="Wiederherstellen"><S w={11} h={11} stroke="#f6e9ea"><path d="M.5 2.500h8v8h-8zM2.500 2V.5h8v8H9" /></S></WindowButton>
          <WindowButton $close aria-label="Schließen"><Cross size={11} c="#f6e9ea" sw={1} /></WindowButton>
        </WindowButtons>
      </TitleLine>
      <TellMe>
        <S w={11} h={16} stroke="#f0c8cc"><path d="M3.500 11c0-2-2.500-3-2.500-6a4.500 4.500 0 019 0c0 3-2.500 4-2.500 6zM3.500 13h4M4 15h3" /></S>
        <input placeholder="Was möchten Sie tun?" aria-label="Was möchten Sie tun?" />
      </TellMe>
    </HeaderPart>
  </Header>
);

const RibbonBar = () => (
  <Ribbon>
    <Group $w={58}>
      <GroupBody><BigButton $w={57}><AnsichtIcon /><BigText>Ansicht<ArrowLine><SmallDown /></ArrowLine></BigText></BigButton></GroupBody>
      <GroupLabel>Ansichten</GroupLabel>
    </Group>
    <Group $w={153}>
      <GroupBody>
        <BigButton $w={53}><DesignsIcon /><BigText>Designs<ArrowLine><SmallDown /></ArrowLine></BigText></BigButton>
        <SmallStack $top={4}>
          <SmallButton $h={32}><ColorsIcon />Farben <SmallDown /></SmallButton>
          <SmallButton $h={32}><FontsIcon />Schriftarten <SmallDown /></SmallButton>
        </SmallStack>
      </GroupBody>
      <GroupLabel>Designs</GroupLabel>
    </Group>
    <Group $w={930} $grow>
      <GroupBody $pad={5}>
        <Gallery>
          <GalleryItems>
            {galleryIcons.map(([name, icon], i) => <GalleryItem key={name} aria-label={name} $active={i === gallerySelected}>{icon}</GalleryItem>)}
          </GalleryItems>
          <GalleryScroll>
            <GalleryArrow $off aria-label="Nach oben"><S w={5} h={3} stroke="none"><path d="M0 3h5L2.500 0z" fill="#b4b4b4" /></S></GalleryArrow>
            <GalleryArrow aria-label="Nach unten"><SmallDown /></GalleryArrow>
            <GalleryArrow aria-label="Mehr"><S w={7} h={8}><path d="M0 1h7" /><path d="M0 3h7L3.500 7z" fill="#666" stroke="none" /></S></GalleryArrow>
          </GalleryScroll>
        </Gallery>
        <BigButton $w={68} $off><PictureIcon /><BigText>Bild<ArrowLine>einfügen <SmallDown c="#b4b4b4" /></ArrowLine></BigText></BigButton>
      </GroupBody>
      <GroupLabel>Steuerelemente</GroupLabel>
    </Group>
    <Group $w={139}>
      <GroupBody $pad={7}>
        <SmallStack>
          <SmallButton><LogoIcon />Logo</SmallButton>
          <SmallButton><TitelIcon />Titel</SmallButton>
          <SmallButton><DateIcon />Datum und Uhrzeit</SmallButton>
        </SmallStack>
      </GroupBody>
      <GroupLabel>Kopfzeile/Fußzeile</GroupLabel>
    </Group>
    <Group $w={590}>
      <GroupBody>
        <BigButton $w={103}><FieldsIcon /><BigText><span>Vorhandene</span><span>Felder hinzufügen</span></BigText></BigButton>
        <BigButton $w={84} $active><SheetIcon /><BigText><span>Eigenschaften-</span><span>blatt</span></BigText></BigButton>
        <BigButton $w={106}><OrderIcon /><BigText>Aktivierreihenfolge</BigText></BigButton>
        <SmallStack>
          <SmallButton $off><SubformIcon />Unterformular in neuem Fenster</SmallButton>
          <SmallButton><CodeIcon />Code anzeigen</SmallButton>
          <SmallButton><MacroIcon />Makros des Formulars zu Visual Basic konvertieren</SmallButton>
        </SmallStack>
      </GroupBody>
      <GroupLabel>Tools</GroupLabel>
    </Group>
    <CollapseSlot><S w={10} h={7} stroke="#555" strokeWidth="2"><path d="M1 6l4-4 4 4" /></S></CollapseSlot>
  </Ribbon>
);

const Navigation = () => (
  <NavPane>
    <NavHead>
      <NavTitle>Alle Access-Obje...</NavTitle>
      <NavIcons>
        <S w={13} h={13} stroke="#999"><rect x=".5" y=".5" width="12" height="12" rx="4" fill="#e4e4e4" /><path d="M3.500 5h6L6.500 9z" fill="#555" stroke="none" /></S>
        <S w={9} h={9} stroke="#555" strokeWidth="1.300"><path d="M4 1L1 4.500 4 8M8 1L5 4.500 8 8" /></S>
      </NavIcons>
    </NavHead>
    <Search>
      <input placeholder="Suchen..." aria-label="Suchen" />
      <SearchIcon><S w={13} h={13} stroke="#6a7488" strokeWidth="1.500"><circle cx="8" cy="5" r="4" /><path d="M5 8l-4 4" strokeWidth="2" /></S></SearchIcon>
    </Search>
    {navGroups.map(([name, kind, items]) => {
      const Icon = navIcons[kind];
      return (
        <React.Fragment key={name}>
          <NavGroup>{name}<DoubleUp /></NavGroup>
          {items.map((it) => <NavItem key={it} $active={it === "tblPlzOrt"}><Icon />{it}</NavItem>)}
        </React.Fragment>
      );
    })}
    <Watermark>
      <S w={80} h={72} stroke="#b0b0b0">
        <path d="M5 6C12-1 34 4 45 30c-4 6-4 8-6 8C34 22 20 10 5 9zM5 6c-6 10-4 30 10 43l6-2C12 38 6 24 6 9" />
        <path d="M15 49c-8 0-9 14-2 17 6 2 12 0 18-2M21 47c-10-1-14 10-8 18M30 66c-6-18 6-44 30-48 16-3 18 4 8 16C58 46 48 54 40 58c6-24 14-34 28-38M30 66c6 6 18 4 21-6 1-4 0-8 0-8M40 68c6-2 6-20 8-28" />
      </S>
    </Watermark>
  </NavPane>
);

const Designer = () => (
  <Doc>
    <DocTabs>
      {docTabs.map(([name, kind], i) => {
        const Icon = navIcons[kind];
        const active = i === 0;
        return (
          <DocTab key={name} $z={9 - i} $active={active}>
            <DocTabFace $active={active}><Icon /><span>{name}</span></DocTabFace>
            <S w={18} h={24} stroke="#a0a0a0">
              <path d="M0 .5c4 0 6 2 8 7l5 11c1 3 3 5 5 5H0z" fill="#fff" stroke="none" />
              <path d="M0 .5c4 0 6 2 8 7l5 11c1 3 3 5 5 5" />
              {!active && <path d="M0 23.500h18" />}
            </S>
          </DocTab>
        );
      })}
      <DocClose aria-label="Schließen"><Cross size={9} /></DocClose>
    </DocTabs>
    <Work>
      <Surface>
        <Row $h={22}>
          <RulerCorner $gap={5} />
          <span />
          <RulerTrack $across><HorizontalRuler /></RulerTrack>
        </Row>
        <Section title="Formularkopf" height={42} rulerCount={2}>
          <Paper $fill="#d4d6e6">
            <GridLines rows={0} />
            <FormTitle>Fahrten</FormTitle>
          </Paper>
          <Pointer><S w={12} h={18}><path d="M1 1v14l3.500-3L7 17l2.500-1L7 11h4z" fill="#111" stroke="#eee" /></S></Pointer>
        </Section>
        <Section title="Detailbereich" height={514} rulerCount={14}>
          <Paper $fill="#fdfdfd"><GridLines rows={13} /></Paper>
          <FieldLabel htmlFor="id" $x={498} $y={15} $w={19}>ID</FieldLabel>
          <FieldInput id="id" defaultValue="ID" $x={521} $y={15} $w={19} />
          <FieldLabel htmlFor="pn" $x={192} $y={46} $w={116}>Personalnummer</FieldLabel>
          <Combo id="pn" value="PersonalnummerFahrt" $x={313} $y={46} $w={228} />
          <FieldLabel htmlFor="fn" $x={192} $y={78} $w={116}>Fahrtnummer</FieldLabel>
          <FieldInput id="fn" defaultValue="Fahrtnummer" $x={313} $y={78} $w={228} />
          <FieldLabel htmlFor="dt" $x={71} $y={58} $w={47}>Datum</FieldLabel>
          <FieldInput id="dt" defaultValue="Datum" $x={48} $y={83} $w={80} />
          <Highlight $x={28} $y={128} $w={343} $h={81} />
          <FieldLabel htmlFor="sa" $bold $x={41} $y={141} $w={88}>StartAdresse</FieldLabel>
          <Combo id="sa" value="StartAdresse" $selected $x={146} $y={140} $w={223} $h={28} />
          <FieldLabel htmlFor="za" $bold $x={41} $y={172} $w={88}>ZielAdresse</FieldLabel>
          <Combo id="za" value="ZielAdresse" $x={150} $y={172} $w={216} />
          <Handle $c="#7e8590" $x={36} $y={135} $w={9} $h={9} />
          <Handle $c="#7e8590" $x={144} $y={135} $w={9} $h={9} />
          <Handle $c="#eca63c" $x={254} $y={137} $w={6} $h={6} />
          <Handle $c="#eca63c" $x={254} $y={164} $w={6} $h={6} />
          <Handle $c="#eca63c" $x={145} $y={150} $w={5} $h={5} />
          <Handle $c="#eca63c" $x={145} $y={163} $w={6} $h={6} />
          <Handle $c="#eca63c" $x={365} $y={138} $w={5} $h={6} />
          <Handle $c="#eca63c" $x={365} $y={150} $w={5} $h={5} />
          <Handle $c="#eca63c" $x={365} $y={163} $w={5} $h={6} />
          <FieldLabel htmlFor="pr" $x={434} $y={145} $w={37}>Preis</FieldLabel>
          <FieldInput id="pr" defaultValue="Preis" $x={476} $y={145} $w={61} />
          <FieldLabel htmlFor="pi" $x={400} $y={176} $w={71}>Inkl. MwSt</FieldLabel>
          <FieldInput id="pi" defaultValue="PreisInklM" $x={476} $y={176} $w={61} />
          <FieldLabel htmlFor="da" $x={34} $y={223} $w={115}>Dauer</FieldLabel>
          <FieldInput id="da" defaultValue="Dauer" $x={155} $y={223} $w={54} />
          <FieldLabel htmlFor="pl" $x={222} $y={223} $w={42}>Plätze</FieldLabel>
          <FieldInput id="pl" defaultValue="Gebucht" $x={271} $y={223} $w={45} />
          <FieldLabel htmlFor="kz" $x={34} $y={251} $w={115}>Kennzeichen</FieldLabel>
          <Combo id="kz" value="Kennzeichen" $x={155} $y={251} $w={227} />
        </Section>
        <Section title="Formularfuß" rulerCount={6} />
      </Surface>
      <VScroll>
        <ScrollButton aria-label="Nach oben"><S w={7} h={4} stroke="none"><path d="M0 4h7L3.500 0z" fill="#666" /></S></ScrollButton>
        <Thumb $size={542} />
        <Track $size={274} />
        <ScrollButton aria-label="Nach unten"><Down /></ScrollButton>
      </VScroll>
      <HScroll>
        <ScrollButton aria-label="Nach links"><S w={5} h={8} stroke="none"><path d="M5 0v8L0 4z" fill="#555" /></S></ScrollButton>
        <Thumb $size={534} />
        <Track $size={271} />
        <ScrollButton aria-label="Nach rechts"><S w={5} h={8} stroke="none"><path d="M0 0v8l5-4z" fill="#555" /></S></ScrollButton>
      </HScroll>
      <Corner />
    </Work>
  </Doc>
);

const PropertySheet = () => (
  <Side>
    <Sheet>
      <SheetHead>
        <div>
          <SheetTitle>Eigenschaftenblatt</SheetTitle>
          <SheetKind>{"Auswahltyp:  Kombinationsfeld"}</SheetKind>
        </div>
        <SheetTools>
          <SheetClose aria-label="Schließen"><Cross size={9} /></SheetClose>
          <S w={14} h={22} stroke="#6a7080"><text x="0" y="9" fontSize="8" fill="#5a6480" stroke="none">A</text><text x="0" y="20" fontSize="8" fill="#5a6480" stroke="none">Z</text><path d="M10.500 3v16M8 16l2.500 3 2.500-3" /></S>
        </SheetTools>
      </SheetHead>
      <ObjectSelect>
        <select aria-label="Objekt" defaultValue="Startadresse"><option>Startadresse</option></select>
        <ComboArrow><Chevron /></ComboArrow>
      </ObjectSelect>
      <SheetTabs>
        {["Format", "Daten", "Ereignis", "Andere", "Alle"].map((t) => <SheetTab key={t} $active={t === "Andere"}>{t}</SheetTab>)}
      </SheetTabs>
      <PropTable>
        <tbody>
          {properties.map(([k, v]) => <tr key={k}><th scope="row">{k}</th><td>{v}</td></tr>)}
        </tbody>
      </PropTable>
    </Sheet>
  </Side>
);

export default function App() {
  return (
    <Window>
      <Global />
      <TitleBar />
      <RibbonBar />
      <Main>
        <Navigation />
        <Splitter />
        <Designer />
        <PropertySheet />
      </Main>
      <StatusBar>
        Entwurfsansicht
        <ViewButtons>
          <ViewButton aria-label="Formularansicht"><S w={14} h={13}><path d="M.5.5h13v12H.5z" /><path d="M0 0h14v4H0z" fill="#555" stroke="none" /><path d="M3 7h3M8 7h4M3 10h3M8 10h4" stroke="#444" strokeWidth="1.500" /></S></ViewButton>
          <ViewButton aria-label="Layoutansicht"><S w={12} h={13}><path d="M1.500 0v13M10.500 0v13M0 1.500h12M0 11.500h12M4 5h5M4 8h5" /></S></ViewButton>
          <ViewButton $active aria-label="Entwurfsansicht"><S w={15} h={14}><path d="M1 1v8h5zM5 8l8-7 1 1-7 7M1 11.500h13v2H1z" /></S></ViewButton>
        </ViewButtons>
      </StatusBar>
    </Window>
  );
}
